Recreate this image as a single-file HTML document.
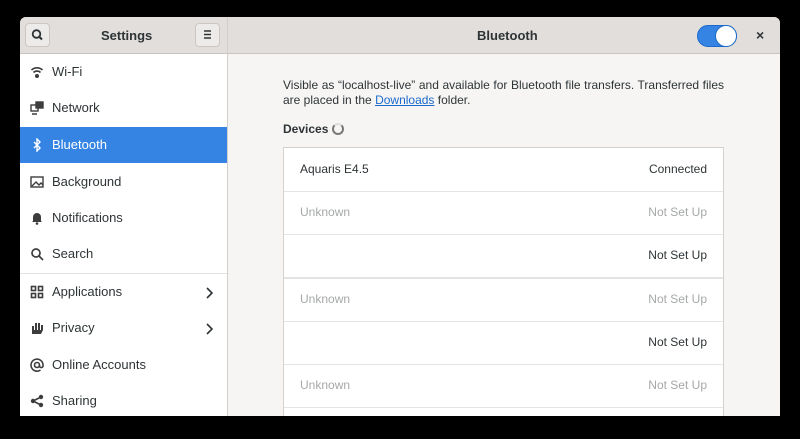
<html><head><style>
body{margin:0;width:800px;height:439px;background:#000;overflow:hidden;font-family:"Liberation Sans",sans-serif;}
.win{position:absolute;left:20px;top:17px;width:760px;height:399px;background:#f6f5f4;border-radius:6px 6px 0 0;overflow:hidden}
.hb{position:absolute;left:0;top:0;width:760px;height:36px;background:#e1dedb;border-bottom:1px solid #c9c6c2}
.sep{position:absolute;left:207px;top:0;width:1px;height:399px;background:#d2cfcb}
.btn{position:absolute;top:6px;width:25px;height:24px;background:#edebe9;border:1px solid #cdc7c2;border-radius:4px;box-sizing:border-box}
.t{position:absolute;font-size:13px;color:#2e3436;font-weight:bold}
.side{position:absolute;left:0;top:37px;width:207px;height:362px;background:#fff}
.it{position:absolute;left:0;width:207px;height:36px;font-size:13px;color:#2e3436;line-height:36px}
.it span{position:absolute;left:32px}
.it svg{position:absolute;left:10px;top:11px}
.sel{background:#3584e4;color:#fff}
.list{position:absolute;left:263px;top:130px;width:441px;height:290px;background:#fff;border:1px solid #d5d1cd;box-sizing:border-box}
.row{position:absolute;left:0;width:439px;height:43px;border-bottom:1px solid #e6e4e2;font-size:12px;color:#2e3436}
.row .l{position:absolute;left:16px;top:14px}.row .r{position:absolute;right:16px;top:14px}
.g{color:#a6a8a8}
</style></head><body>
<div class="win">
<div class="hb"></div>
<div class="btn" style="left:5px"><svg width="23" height="22"><circle cx="10.5" cy="10" r="3.8" stroke="#2e3436" stroke-width="1.8" fill="none"/><line x1="13" y1="12.5" x2="16" y2="15.5" stroke="#2e3436" stroke-width="2"/></svg></div>
<div class="t" style="left:81px;top:11px">Settings</div>
<div class="btn" style="left:175px"><svg width="23" height="22"><path d="M8 7h7M8 10.5h7M8 14h7" stroke="#2e3436" stroke-width="1.6"/></svg></div>
<div class="t" style="left:457px;top:11px">Bluetooth</div>
<div style="position:absolute;left:677px;top:8px;width:40px;height:22px;border-radius:11px;background:#3584e4;border:1px solid #1b6acb;box-sizing:border-box"></div>
<div style="position:absolute;left:695px;top:8px;width:22px;height:22px;border-radius:11px;background:#fff;border:1px solid #1b6acb;box-sizing:border-box"></div>
<div class="t" style="left:736px;top:10px;font-size:14px">×</div>
<div class="sep"></div>
<div class="side">
<div class="it" style="top:0"><svg width="14" height="14" fill="none" stroke="#3d3d3d" stroke-width="1.6"><path d="M1.5 5a8 8 0 0 1 11 0M3.5 7.5a5 5 0 0 1 7 0"/><circle cx="7" cy="11" r="1.2" fill="#3d3d3d"/></svg><span>Wi-Fi</span></div>
<div class="it" style="top:36px"><svg width="14" height="14" fill="none" stroke="#3d3d3d" stroke-width="1.4"><rect x="1" y="4" width="7" height="6"/><rect x="6" y="1" width="7" height="6" fill="#3d3d3d"/><path d="M2 13h5"/></svg><span>Network</span></div>
<div class="it sel" style="top:73px"><svg width="14" height="14" fill="none" stroke="#fff" stroke-width="1.4"><path d="M4 4l6 6-3 3V1l3 3-6 6"/></svg><span>Bluetooth</span></div>
<div class="it" style="top:110px"><svg width="14" height="14" fill="none" stroke="#3d3d3d" stroke-width="1.4"><rect x="1" y="2" width="12" height="10"/><path d="M2 11l4-4 3 3 2-2 2 2" /></svg><span>Background</span></div>
<div class="it" style="top:146px"><svg width="14" height="14" fill="#3d3d3d"><path d="M3 10V6a4 4 0 0 1 8 0v4l1 1H2z"/><circle cx="7" cy="12.5" r="1.3"/></svg><span>Notifications</span></div>
<div class="it" style="top:182px"><svg width="14" height="14" fill="none" stroke="#3d3d3d" stroke-width="1.7"><circle cx="6" cy="6" r="4"/><path d="M9 9l4 4"/></svg><span>Search</span></div>
<div style="position:absolute;top:219px;left:0;width:207px;height:1px;background:#e4e2df"></div>
<div class="it" style="top:220px"><svg width="14" height="14" fill="none" stroke="#3d3d3d" stroke-width="1.6"><rect x="1.5" y="1.5" width="4" height="4"/><rect x="8.5" y="1.5" width="4" height="4"/><rect x="1.5" y="8.5" width="4" height="4"/><rect x="8.5" y="8.5" width="4" height="4"/></svg><span>Applications</span><svg style="left:185px;top:13px" width="8" height="12" fill="none" stroke="#2e3436" stroke-width="1.6"><path d="M2 1l5 5-5 5"/></svg></div>
<div class="it" style="top:256px"><svg width="14" height="14" fill="#3d3d3d"><path d="M2 13V5h2v4h1V2h2v7h1V2h2v7h1V4h2v5l-2 4z"/></svg><span>Privacy</span><svg style="left:185px;top:13px" width="8" height="12" fill="none" stroke="#2e3436" stroke-width="1.6"><path d="M2 1l5 5-5 5"/></svg></div>
<div class="it" style="top:293px"><svg width="14" height="14" fill="none" stroke="#3d3d3d" stroke-width="1.6"><circle cx="7" cy="7" r="2.5"/><path d="M9.5 7v1.5a2 2 0 0 0 3.5 0V7a6 6 0 1 0-2.5 5"/></svg><span>Online Accounts</span></div>
<div class="it" style="top:329px"><svg width="14" height="14" fill="#3d3d3d"><circle cx="11" cy="3" r="2.2"/><circle cx="3" cy="7" r="2.2"/><circle cx="11" cy="11" r="2.2"/><path d="M3 7L11 3M3 7l8 4" stroke="#3d3d3d" stroke-width="1.6"/></svg><span>Sharing</span></div>
</div>
<div style="position:absolute;left:263px;top:61px;width:441px;font-size:12px;color:#2e3436;line-height:15px;text-align:justify">Visible as “localhost-live” and available for Bluetooth file transfers. Transferred files are placed in the <u style="color:#1b6acb">Downloads</u> folder.</div>
<div style="position:absolute;left:263px;top:105px;font-size:12px;font-weight:bold;color:#2e3436">Devices</div>
<div style="position:absolute;left:312px;top:106px;width:8px;height:8px;border:2px solid #777;border-top-color:#ddd;border-radius:50%"></div>
<div class="list">
<div class="row" style="top:0"><span class="l">Aquaris E4.5</span><span class="r">Connected</span></div>
<div class="row" style="top:43px"><span class="l g">Unknown</span><span class="r g">Not Set Up</span></div>
<div class="row" style="top:86px;border-bottom:2px solid #e6e4e2"><span class="r">Not Set Up</span></div>
<div class="row" style="top:130px"><span class="l g">Unknown</span><span class="r g">Not Set Up</span></div>
<div class="row" style="top:173px"><span class="r">Not Set Up</span></div>
<div class="row" style="top:216px"><span class="l g">Unknown</span><span class="r g">Not Set Up</span></div>
</div>
</div>
</body></html>
